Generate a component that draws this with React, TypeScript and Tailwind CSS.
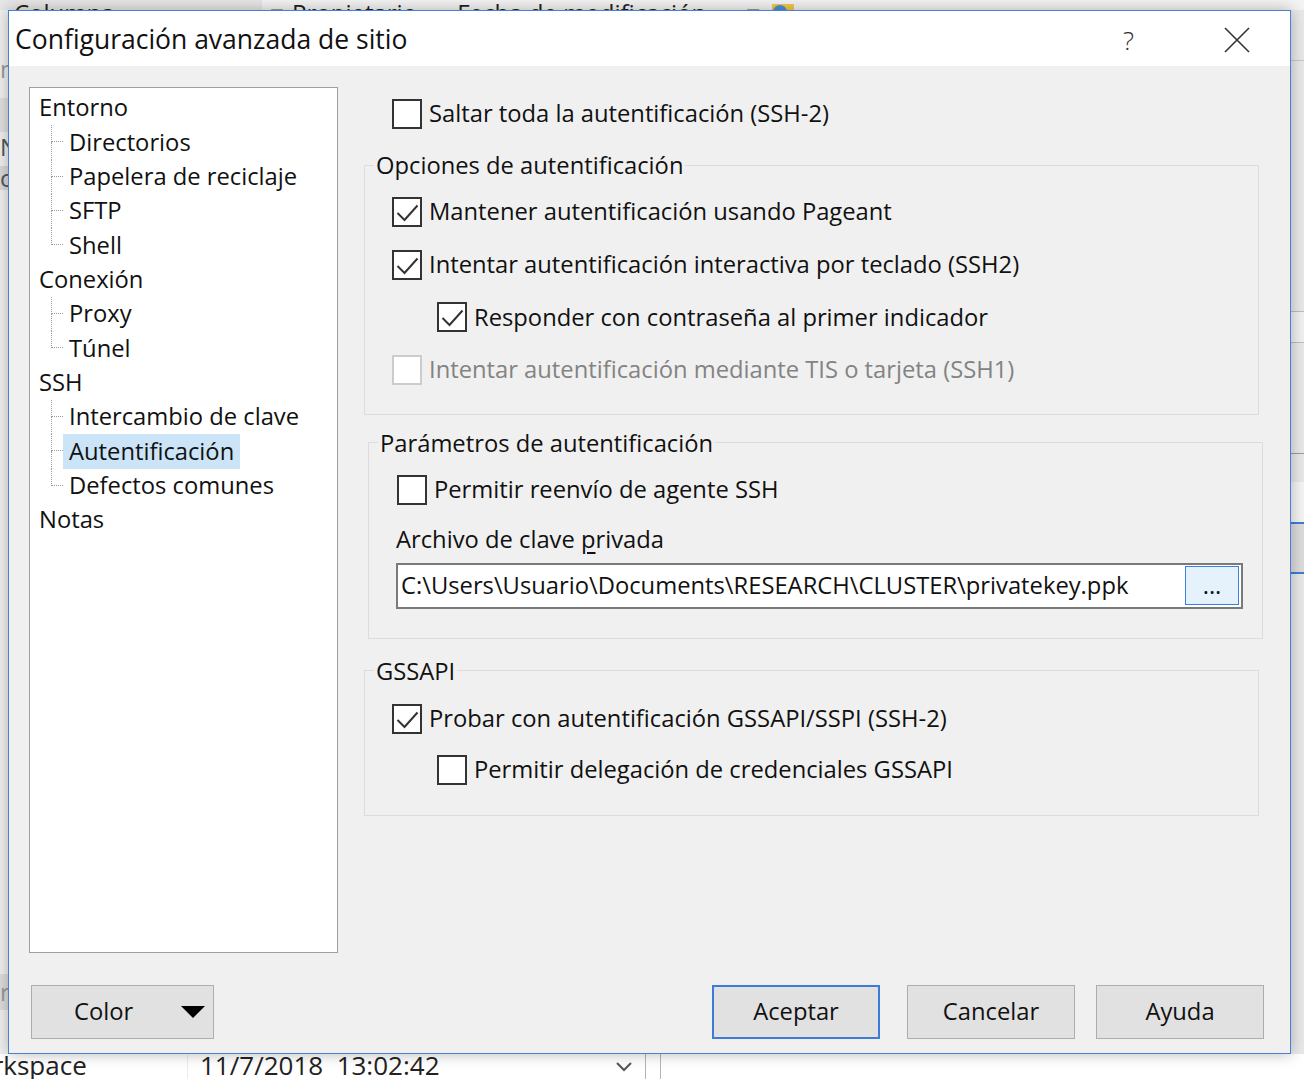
import React from "react";

type TreeNode = { label: string; children: string[] };

const tree: TreeNode[] = [
  { label: "Entorno", children: ["Directorios", "Papelera de reciclaje", "SFTP", "Shell"] },
  { label: "Conexión", children: ["Proxy", "Túnel"] },
  { label: "SSH", children: ["Intercambio de clave", "Autentificación", "Defectos comunes"] },
  { label: "Notas", children: [] },
];

const SELECTED = "Autentificación";

const CheckBox = ({ checked = false, disabled = false }: { checked?: boolean; disabled?: boolean }) => (
  <svg width="30" height="30" viewBox="0 0 30 30" className="shrink-0">
    <rect
      x="1"
      y="1"
      width="28"
      height="28"
      fill="#ffffff"
      stroke={disabled ? "#cccccc" : "#333333"}
      strokeWidth="2"
    />
    {checked && (
      <polyline points="5.5,16 12.5,23 25.5,8.5" fill="none" stroke="#333333" strokeWidth="2" />
    )}
  </svg>
);

const CheckRow = ({
  label,
  checked,
  disabled,
  className = "",
}: {
  label: string;
  checked?: boolean;
  disabled?: boolean;
  className?: string;
}) => (
  <div className={`flex items-center gap-[7px] h-[30px] ${className}`}>
    <CheckBox checked={checked} disabled={disabled} />
    <span className={disabled ? "text-[#838383]" : "text-[#111111]"}>{label}</span>
  </div>
);

const Group = ({
  title,
  className = "",
  children,
}: {
  title: string;
  className?: string;
  children: React.ReactNode;
}) => (
  <fieldset className={`border border-[#dcdcdc] w-[895px] ${className}`}>
    <legend className="ml-[9px] px-[2px] leading-[30px] text-[#111111]">{title}</legend>
    {children}
  </fieldset>
);

const TreePanel = () => (
  <div className="mt-[21px] ml-[20px] w-[309px] h-[866px] shrink-0 bg-white border border-[#a0a0a0] pt-[3px]">
    {tree.map((node) => (
      <div key={node.label}>
        <div className="h-[34.33px] flex items-center pl-[9px] text-[#111111]">{node.label}</div>
        {node.children.map((child, i) => {
          const last = i === node.children.length - 1;
          return (
            <div key={child} className="h-[34.33px] flex">
              <div className="ml-[21px] w-[12px] flex flex-col">
                <div className="h-1/2 border-l border-b border-dotted border-[#9a9a9a]" />
                <div className={`h-1/2 ${last ? "" : "border-l border-dotted border-[#9a9a9a]"}`} />
              </div>
              <div
                className={`h-full flex items-center px-[6px] text-[#111111] ${
                  child === SELECTED ? "bg-[#cce4f7]" : ""
                }`}
              >
                {child}
              </div>
            </div>
          );
        })}
      </div>
    ))}
  </div>
);

const RightPanel = () => (
  <div className="ml-[26px] flex flex-col">
    <CheckRow label="Saltar toda la autentificación (SSH-2)" className="mt-[33px] ml-[28px]" />

    <Group title="Opciones de autentificación" className="mt-[21px] pb-[29px]">
      <div className="flex flex-col gap-[22.67px] mt-[17px] ml-[27px]">
        <CheckRow label="Mantener autentificación usando Pageant" checked />
        <CheckRow label="Intentar autentificación interactiva por teclado (SSH2)" checked />
        <CheckRow label="Responder con contraseña al primer indicador" checked className="ml-[45px]" />
        <CheckRow label="Intentar autentificación mediante TIS o tarjeta (SSH1)" disabled />
      </div>
    </Group>

    <Group title="Parámetros de autentificación" className="mt-[13px] ml-[4px] pb-[29px]">
      <div className="flex flex-col ml-[27px]">
        <CheckRow label="Permitir reenvío de agente SSH" className="mt-[17px] ml-[1px]" />
        <div className="mt-[19px] leading-[30px] text-[#111111]">
          Archivo de clave <span className="underline underline-offset-[4px]">p</span>rivada
        </div>
        <div className="mt-[9px] w-[847px] h-[46px] border-2 border-[#7a7a7a] bg-white flex items-center">
          <span className="pl-[3px] text-[#111111]">
            C:\Users\Usuario\Documents\RESEARCH\CLUSTER\privatekey.ppk
          </span>
          <div className="ml-auto mr-[2px] w-[54px] h-[39px] border-[1.5px] border-[#3d80dc] bg-[#e5f1fb] flex items-center justify-center text-[#111111]">
            ...
          </div>
        </div>
      </div>
    </Group>

    <Group title="GSSAPI" className="mt-[17px] pb-[30px]">
      <div className="flex flex-col ml-[27px]">
        <CheckRow label="Probar con autentificación GSSAPI/SSPI (SSH-2)" checked className="mt-[18px]" />
        <CheckRow label="Permitir delegación de credenciales GSSAPI" className="mt-[21px] ml-[45px]" />
      </div>
    </Group>
  </div>
);

const DialogButton = ({
  label,
  primary = false,
  className = "",
}: {
  label: string;
  primary?: boolean;
  className?: string;
}) => (
  <div
    className={`h-[54px] w-[168px] flex items-center justify-center bg-[#e1e1e1] text-[#111111] ${
      primary ? "border-2 border-[#3d7bd9]" : "border-[1.5px] border-[#adadad]"
    } ${className}`}
  >
    {label}
  </div>
);

const Dialog = () => (
  <div className="absolute left-[8px] top-[10px] w-[1283px] h-[1044px] border border-[#4a80d4] bg-[#f0f0f0] shadow-[0_0_14px_rgba(0,0,0,0.28)] flex flex-col">
    {/* title bar */}
    <div className="h-[55px] shrink-0 bg-white flex items-center pt-[2px]">
      <span className="pl-[6px] text-[26.5px] text-[#111111] leading-none">Configuración avanzada de sitio</span>
      <span className="ml-auto text-[26px] text-[#333333] font-light leading-none">?</span>
      <svg width="26" height="26" viewBox="0 0 26 26" className="ml-[90px] mr-[40px]">
        <path d="M1 1 L25 25 M25 1 L1 25" stroke="#333333" strokeWidth="1.6" fill="none" />
      </svg>
    </div>

    {/* body */}
    <div className="flex-1 flex flex-col">
      <div className="flex">
        <TreePanel />
        <RightPanel />
      </div>

      <div className="mt-[32px] flex pr-[26px]">
        <div className="ml-[22px] h-[54px] w-[183px] flex items-center bg-[#e1e1e1] border-[1.5px] border-[#adadad] text-[#111111]">
          <span className="pl-[42px]">Color</span>
          <svg width="24" height="12" viewBox="0 0 24 12" className="ml-auto mr-[8px]">
            <polygon points="0,0 24,0 12,12" fill="#000000" />
          </svg>
        </div>
        <DialogButton label="Aceptar" primary className="ml-auto w-[167px]" />
        <DialogButton label="Cancelar" className="ml-[27px]" />
        <DialogButton label="Ayuda" className="ml-[21px]" />
      </div>
    </div>
  </div>
);

const Background = () => (
  <div className="h-full flex flex-col">
    {/* column headers of the window behind, mostly hidden by the dialog */}
    <div className="h-[10px] shrink-0 overflow-hidden flex bg-[#f3f3f3] text-[24px] leading-[24px] text-[#222222] whitespace-nowrap">
      <div className="w-[262px] h-full bg-[#e6e6e6] pl-[14px] pt-[1px]">Columna</div>
      <span className="ml-[8px] pt-[1px] text-[#9a9a9a]">≡</span>
      <span className="ml-[8px] pt-[1px]">Propietario</span>
      <span className="ml-[40px] pt-[1px]">Fecha de modificación</span>
      <span className="ml-[40px] pt-[1px] text-[#9a9a9a]">≡</span>
      <svg width="26" height="22" viewBox="0 0 26 22" className="ml-[10px] shrink-0">
        <rect x="2" y="4" width="22" height="16" fill="#f2c94c" />
        <circle cx="10" cy="12" r="7" fill="#4a8fd6" />
      </svg>
    </div>

    <div className="flex-1 flex">
      <div className="w-[8px] overflow-hidden flex flex-col text-[24px] leading-[30px] text-[#555555] bg-[#f0f0f0]">
        <div className="mt-[44px] h-[30px] text-[#9a9a9a]">ni</div>
        <div className="mt-[14px] h-[34px] bg-[#e0e0e0]" />
        <div className="h-[30px]">N</div>
        <div className="mt-[4px] h-[24px] bg-[#d9d9d9] leading-[24px]">c</div>
        <div className="mt-auto mb-[44px] h-[36px] bg-[#dddddd] leading-[36px] text-[#9a9a9a]">r</div>
      </div>
      <div className="flex-1" />
      <div className="w-[14px] flex flex-col bg-[#e8e8e8] border-l border-[#d0d0d0]">
        <div className="mt-[50px] h-[1px] bg-[#c8c8c8]" />
        <div className="mt-[250px] h-[32px] border-y border-[#bdbdbd] bg-[#f0f0f0]" />
        <div className="mt-[110px] h-[1px] bg-[#9a9a9a]" />
        <div className="mt-[28px] h-[40px] bg-[#f4f4f4]" />
        <div className="h-[2px] bg-[#3d7bd9]" />
        <div className="h-[48px] bg-[#dcdcdc]" />
        <div className="h-[2px] bg-[#3d7bd9]" />
      </div>
    </div>

    {/* file list row visible under the dialog */}
    <div className="h-[25px] shrink-0 bg-white flex items-end text-[26px] leading-[28px] text-[#222222] whitespace-nowrap overflow-hidden">
      <div className="w-[188px] h-full overflow-hidden border-r border-[#ececec] flex items-end">
        <span className="-ml-[47px]">Workspace</span>
      </div>
      <span className="ml-[12px] w-[400px]">11/7/2018&nbsp;&nbsp;13:02:42</span>
      <div className="ml-[7px] w-[34px] h-full flex items-center justify-center">
        <svg width="16" height="10" viewBox="0 0 16 10">
          <polyline points="1,1 8,8 15,1" fill="none" stroke="#555555" strokeWidth="2" />
        </svg>
      </div>
      <div className="ml-[4px] w-[1px] h-full bg-[#b5b5b5]" />
      <div className="ml-[14px] w-[1px] h-full bg-[#b5b5b5]" />
    </div>
  </div>
);

export default function App() {
  return (
    <div className="relative w-[1304px] h-[1079px] overflow-hidden bg-[#f0f0f0] font-['Open_Sans','Noto_Sans',sans-serif] text-[23.75px]">
      <Background />
      <Dialog />
    </div>
  );
}
